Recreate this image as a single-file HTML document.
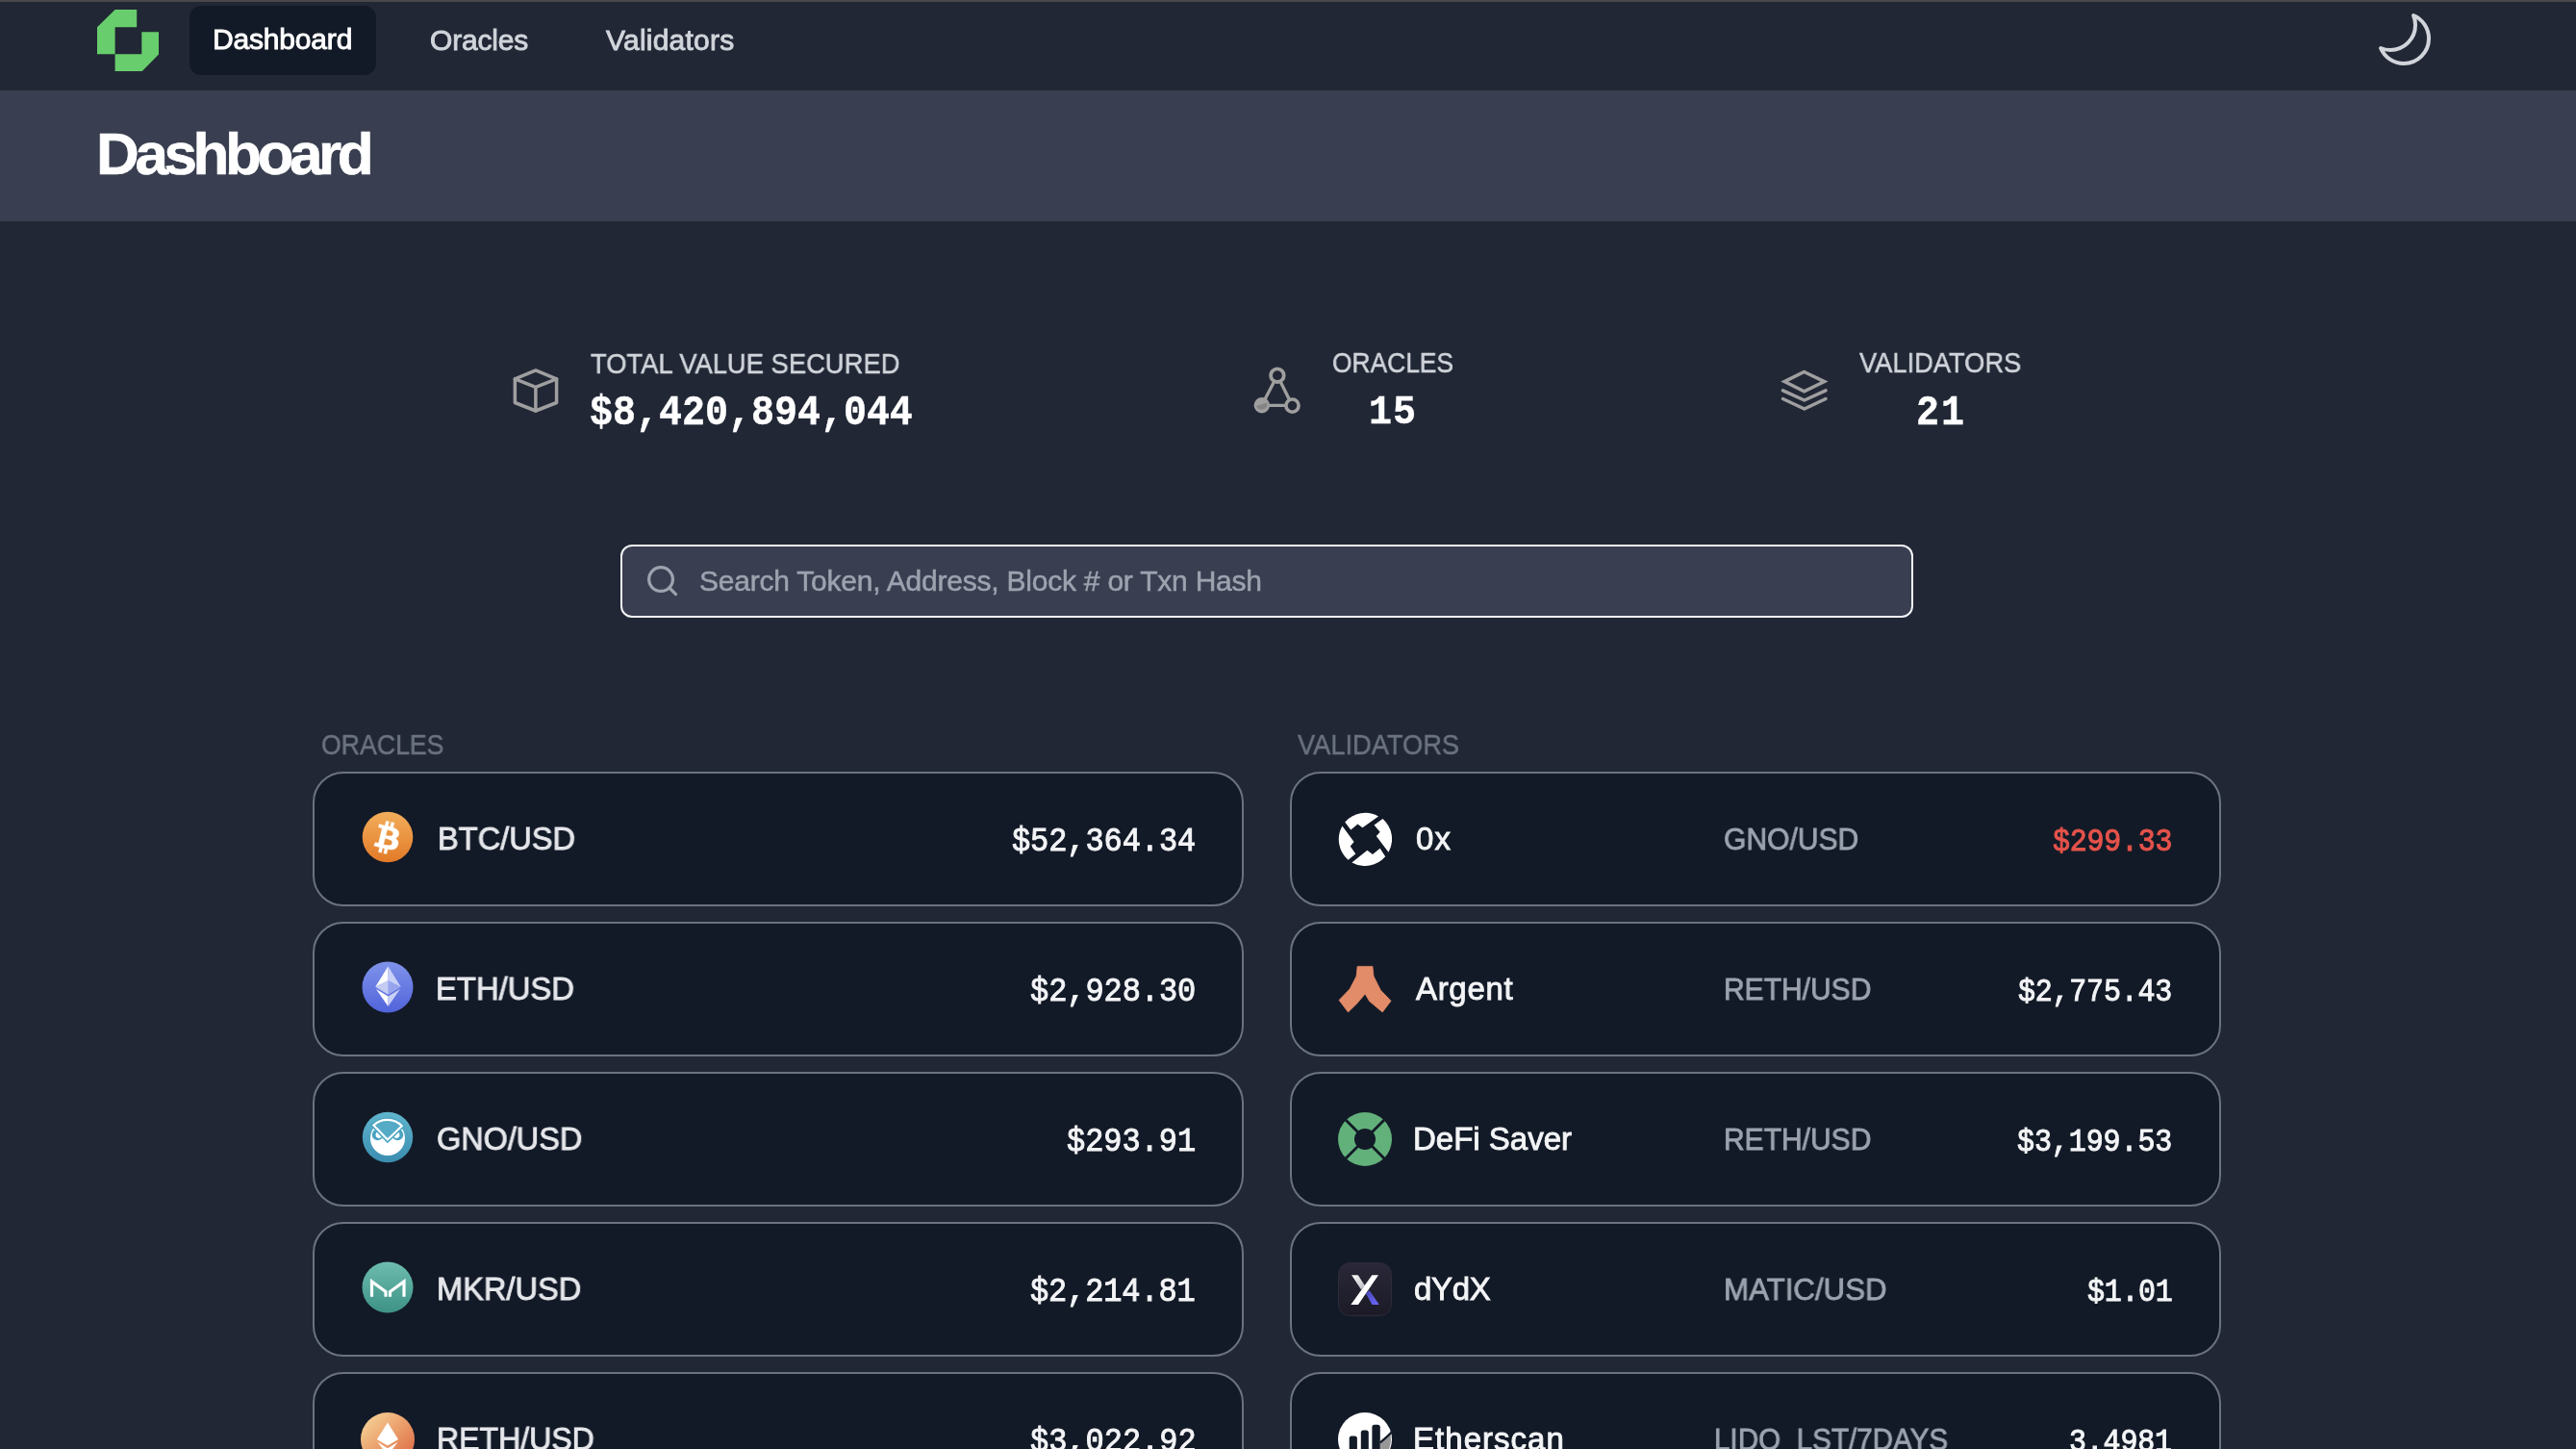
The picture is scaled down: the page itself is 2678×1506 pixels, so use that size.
<!DOCTYPE html>
<html><head><meta charset="utf-8"><title>Dashboard</title>
<style>
html,body{margin:0;padding:0;}
body{width:2678px;height:1506px;overflow:hidden;position:relative;background:#212735;}
.t{position:absolute;white-space:pre;will-change:transform;}
.card{position:absolute;width:964px;height:136px;border:2px solid #6b7280;border-radius:32px;background:#131a27;box-sizing:content-box;}
.abs{position:absolute;}
</style></head><body>
<div class="abs" style="left:0;top:0;width:2678px;height:2px;background:#484946;"></div>
<div class="abs" style="left:0;top:94px;width:2678px;height:136px;background:#393f50;"></div>
<div class="abs" style="left:197px;top:6px;width:194px;height:72px;border-radius:12px;background:#131a27;"></div>
<div class="abs" style="left:645px;top:566px;width:1340px;height:72px;border:2px solid #f3f4f6;border-radius:12px;background:#393f50;"></div>
<div class="card" style="left:325px;top:802px;"></div>
<div class="card" style="left:1341px;top:802px;"></div>
<div class="card" style="left:325px;top:958px;"></div>
<div class="card" style="left:1341px;top:958px;"></div>
<div class="card" style="left:325px;top:1114px;"></div>
<div class="card" style="left:1341px;top:1114px;"></div>
<div class="card" style="left:325px;top:1270px;"></div>
<div class="card" style="left:1341px;top:1270px;"></div>
<div class="card" style="left:325px;top:1426px;"></div>
<div class="card" style="left:1341px;top:1426px;"></div>
<svg class="abs" style="left:101px;top:10px;" width="64" height="64" viewBox="0 0 64 64"><polygon fill="#68cd6c" points="0,18.3 18.6,0 41.2,0 41.2,18.3 18.6,18.3 18.6,46.3 0,46.3"/><polygon fill="#68cd6c" points="46.3,23.2 64.2,23.2 64.2,46.3 46.3,64.5 18.6,64.5 18.6,46.3 46.3,46.3"/></svg>
<svg class="abs" style="left:2469px;top:10px;" width="64" height="64" viewBox="0 0 24 24"><g transform="translate(24,0) scale(-1,1)"><path fill="none" stroke="#d1d5db" stroke-width="1.5" stroke-linecap="round" stroke-linejoin="round" d="M21.752 15.002A9.718 9.718 0 0118 15.75c-5.385 0-9.75-4.365-9.75-9.75 0-1.33.266-2.597.748-3.752A9.753 9.753 0 003 11.25C3 16.635 7.365 21 12.75 21a9.753 9.753 0 009.002-5.998z"/></g></svg>
<svg class="abs" style="left:525px;top:375px;" width="65" height="60" viewBox="0 0 65 60"><g fill="none" stroke="#9f9f9f" stroke-width="3.5" stroke-linejoin="round" stroke-linecap="round"><path d="M31.9 9.9 L53.6 18.8 L53.6 43.5 L31.9 52 L10.35 43.5 L10.35 18.8 Z"/><path d="M10.35 18.8 L31.9 27.3 L53.6 18.8 M31.9 27.3 L31.9 52"/></g></svg>
<svg class="abs" style="left:1298px;top:376px;" width="60" height="60" viewBox="0 0 60 60"><g fill="none" stroke="#9f9f9f" stroke-width="3.3"><line x1="29.9" y1="14.2" x2="13.8" y2="45.2"/><line x1="29.9" y1="14.2" x2="45.5" y2="45.5"/><line x1="13.8" y1="45.3" x2="45.5" y2="45.3"/></g><circle cx="29.9" cy="14.2" r="6.8" fill="#212735" stroke="#9f9f9f" stroke-width="3.8"/><circle cx="45.5" cy="45.6" r="6.6" fill="#212735" stroke="#9f9f9f" stroke-width="3.6"/><circle cx="13.8" cy="45.2" r="8.2" fill="#9f9f9f"/><path d="M8 46 A6 6 0 0 0 19.5 44 L19 42.5 Z" fill="#858585"/></svg>
<svg class="abs" style="left:1845px;top:378px;" width="60" height="54" viewBox="0 0 60 54"><g fill="none" stroke="#9f9f9f" stroke-width="3.5" stroke-linecap="round"><path d="M30.6 8.5 L51.6 18.6 L30.6 28.9 L10.1 18.6 Z" stroke-linejoin="miter"/><path d="M8.5 27.8 L30.8 38 L53 27.8" stroke-linejoin="round"/><path d="M8.5 36.5 L30.8 47 L53 36.5" stroke-linejoin="round"/></g></svg>
<svg class="abs" style="left:669.8px;top:584.9px;" width="37.2" height="37.2" viewBox="0 0 24 24"><g fill="none" stroke="#9ca3af" stroke-width="2.1" stroke-linecap="round"><circle cx="11" cy="11" r="8"/><line x1="21" y1="21" x2="16.65" y2="16.65"/></g></svg>
<svg class="abs" style="left:0;top:0" width="0" height="0"><defs>
<linearGradient id="gBtc" x1="0" y1="0" x2="0" y2="1"><stop offset="0" stop-color="#f2ae5b"/><stop offset="1" stop-color="#e27a28"/></linearGradient>
<linearGradient id="gEth" x1="0" y1="0" x2="0" y2="1"><stop offset="0" stop-color="#7f93ea"/><stop offset="1" stop-color="#5163da"/></linearGradient>
<linearGradient id="gGno" x1="0" y1="0" x2="0" y2="1"><stop offset="0" stop-color="#60b5cd"/><stop offset="1" stop-color="#3a8db0"/></linearGradient>
<linearGradient id="gMkr" x1="0" y1="0" x2="0" y2="1"><stop offset="0" stop-color="#6dbdb0"/><stop offset="1" stop-color="#3d9285"/></linearGradient>
<linearGradient id="gReth" x1="0.15" y1="0.1" x2="0.9" y2="0.9"><stop offset="0" stop-color="#f4cd93"/><stop offset="0.45" stop-color="#eba06c"/><stop offset="1" stop-color="#dd6a44"/></linearGradient>
<linearGradient id="gDydx" x1="0" y1="0" x2="0" y2="1"><stop offset="0" stop-color="#2a2838"/><stop offset="1" stop-color="#1b1a26"/></linearGradient>
<linearGradient id="gDyW" x1="0" y1="0" x2="1" y2="1"><stop offset="0" stop-color="#ffffff"/><stop offset="1" stop-color="#b8b8c0"/></linearGradient>
<linearGradient id="gDyP" x1="0" y1="0" x2="1" y2="1"><stop offset="0" stop-color="#4a46b8"/><stop offset="1" stop-color="#6b68ff"/></linearGradient>
</defs></svg>
<svg class="abs" style="left:375px;top:842.2px;" width="56" height="56" viewBox="0 0 56 56"><circle cx="28" cy="28" r="26.3" fill="url(#gBtc)"/><g transform="translate(-0.3 0.9) scale(1.72)"><path fill="#ffffff" stroke="#ffffff" stroke-width="0.25" d="M23.189 14.02c.314-2.096-1.283-3.223-3.465-3.975l.708-2.84-1.728-.43-.69 2.765c-.454-.114-.92-.22-1.385-.326l.695-2.783L15.596 6l-.708 2.839c-.376-.086-.746-.17-1.104-.26l.002-.009-2.384-.595-.46 1.846s1.283.294 1.256.312c.7.175.826.638.805 1.006l-.806 3.235c.048.012.11.03.18.057l-.183-.045-1.13 4.532c-.086.212-.303.531-.793.41.018.025-1.256-.313-1.256-.313l-.858 1.978 2.25.561c.418.105.828.215 1.231.318l-.715 2.872 1.727.43.708-2.84c.472.127.93.245 1.378.357l-.706 2.828 1.728.43.715-2.866c2.948.558 5.164.333 6.097-2.333.752-2.146-.037-3.385-1.588-4.192 1.13-.26 1.98-1.003 2.207-2.538zm-3.95 5.538c-.533 2.147-4.148.986-5.320.695l.95-3.805c1.172.293 4.929.872 4.37 3.11zm.535-5.569c-.487 1.953-3.495.96-4.47.717l.86-3.45c.975.243 4.118.696 3.61 2.733z"/></g></svg>
<svg class="abs" style="left:375px;top:998.2px;" width="56" height="56" viewBox="0 0 56 56"><circle cx="28" cy="28" r="26.5" fill="url(#gEth)"/><polygon points="28.5,6.2 15.4,27.6 28.5,35.5" fill="#ffffff"/><polygon points="28.5,6.2 41.6,27.6 28.5,35.5" fill="#c9d0f6"/><polygon points="28.5,21 15.4,27.6 28.5,35.5 41.6,27.6" fill="#8d9cec" opacity="0.85"/><polygon points="15.4,27.6 28.5,21 28.5,35.5" fill="#c4ccf4"/><polygon points="16,30 28.5,48 28.5,37.6" fill="#ffffff"/><polygon points="41,30 28.5,48 28.5,37.6" fill="#c9d0f6"/></svg>
<svg class="abs" style="left:375px;top:1154.2px;" width="56" height="56" viewBox="0 0 56 56"><circle cx="28" cy="28" r="26.2" fill="url(#gGno)"/><circle cx="28" cy="29" r="18" fill="#ffffff"/><circle cx="17.6" cy="25.4" r="5.8" fill="#4aa3c1"/><circle cx="38.4" cy="25.4" r="5.8" fill="#4aa3c1"/><circle cx="18.9" cy="25.6" r="3.3" fill="#ffffff"/><circle cx="37.1" cy="25.6" r="3.3" fill="#ffffff"/><path d="M13.4 15.6 A21 21 0 0 1 42.8 16.2 L27.9 30.6 Z" fill="#4fa8c4" stroke="#4aa3c1" stroke-width="5" stroke-linejoin="miter"/><path d="M13.4 15.6 A21 21 0 0 1 42.8 16.2 L27.9 30.6 Z" fill="#55abc6" stroke="#ffffff" stroke-width="2.1" stroke-linejoin="miter"/></svg>
<svg class="abs" style="left:375px;top:1310.2px;" width="56" height="56" viewBox="0 0 56 56"><circle cx="28" cy="28" r="26.5" fill="url(#gMkr)"/><path d="M11.5 47.2 L11.5 31.5 L26 42 L26 47.2 M30.5 47.2 L30.5 42 L45 31.5 L45 47.2" transform="translate(0,-9.5)" fill="none" stroke="#ffffff" stroke-width="3.2" stroke-linejoin="miter"/></svg>
<svg class="abs" style="left:375px;top:1467.9px;" width="56" height="56" viewBox="0 0 56 56"><circle cx="28" cy="28" r="28" fill="url(#gReth)"/><polygon points="28,10.5 16.9,28 28,34.6 39,28" fill="#ffffff"/><polygon points="17.5,30.8 28,45 38.5,30.8 28,37.3" fill="#ffffff"/></svg>
<svg class="abs" style="left:1391px;top:844.1px;" width="56" height="56" viewBox="0 0 56 56"><path fill="#ffffff" d="M7.22 10.47 A28.0 28.0 0 0 1 42.01 4.40 L25.44 16.27 L20.47 12.40 L13.30 18.48 Z M46.43 6.88 A28.0 28.0 0 0 1 52.50 41.67 L39.80 25.10 L43.67 20.69 L37.59 13.51 Z M49.19 46.36 A28.0 28.0 0 0 1 14.40 52.44 L30.41 39.74 L35.94 43.88 L43.67 37.81 Z M10.54 49.68 A28.0 28.0 0 0 1 4.46 14.61 L16.61 30.90 L12.74 35.60 L18.27 43.60 Z "/></svg>
<svg class="abs" style="left:1391px;top:1000.1px;" width="56" height="56" viewBox="0 0 56 56"><polygon fill="#e38c69" stroke="#e38c69" stroke-width="0.8" stroke-linejoin="round" points="20.2,4.4 35.9,4.4 37.0,14.6 44.2,29.0 55.0,40.3 46.2,51.9 32.6,40.6 28.2,32.9 19.9,42.8 10.5,51.9 1.1,39.5 12.2,27.9 19.1,14.6"/></svg>
<svg class="abs" style="left:1391px;top:1156px;" width="56" height="56" viewBox="0 0 56 56"><circle cx="28" cy="28" r="28" fill="#62b07a"/><circle cx="28" cy="28" r="11" fill="#131a27"/><line x1="8" y1="8" x2="48" y2="48" stroke="#131a27" stroke-width="2.9"/><line x1="48" y1="8" x2="8" y2="48" stroke="#131a27" stroke-width="2.9"/></svg>
<svg class="abs" style="left:1391px;top:1311.8px;" width="56" height="56" viewBox="0 0 56 56"><rect x="0.5" y="0.5" width="55" height="55" rx="12" fill="url(#gDydx)" stroke="#2d2b3b" stroke-width="1"/><polygon fill="url(#gDyW)" points="14.1,13.3 20.8,13.3 28.0,24.2 24.0,28.2"/><polygon fill="url(#gDyP)" points="29.0,32.6 32.6,29.0 42.8,43.9 35.4,43.9"/><polygon fill="#ffffff" points="35.4,13.3 42.0,13.3 21.0,43.9 13.3,43.9"/></svg>
<svg class="abs" style="left:1391px;top:1467.6px;" width="56" height="56" viewBox="0 0 56 56"><circle cx="28" cy="28" r="28" fill="#ffffff"/><clipPath id="esClip"><circle cx="28" cy="28" r="27"/></clipPath><path clip-path="url(#esClip)" d="M43.8 31.4 Q50.0 26.4 56.0 20.4 L61.0 32.4 L45.0 52.4 Z" fill="#979797"/><path d="M43.8 31.4 Q50.0 26.4 56.0 20.4" fill="none" stroke="#131a27" stroke-width="2.2"/><rect x="11.7" y="24.4" width="8.2" height="30" rx="2.5" fill="#131a27"/><rect x="23.8" y="18.4" width="8.0" height="30" rx="2.5" fill="#131a27"/><rect x="35.4" y="12.8" width="8.4" height="36" rx="2.5" fill="#131a27"/></svg>
<div class="t" id="navDash" style="top:26.40px;font-family:'Liberation Sans';font-weight:400;font-size:30px;line-height:30px;color:#ffffff;letter-spacing:-0.180px;left:220.98px;-webkit-text-stroke:0.9px #ffffff;">Dashboard</div>
<div class="t" id="navOr" style="top:26.61px;font-family:'Liberation Sans';font-weight:400;font-size:30px;line-height:30px;color:#d1d5db;letter-spacing:-0.180px;left:446.82px;-webkit-text-stroke:0.9px #d1d5db;">Oracles</div>
<div class="t" id="navVal" style="top:26.81px;font-family:'Liberation Sans';font-weight:400;font-size:30px;line-height:30px;color:#d1d5db;letter-spacing:0.220px;left:630.34px;-webkit-text-stroke:0.9px #d1d5db;">Validators</div>
<div class="t" id="hdr" style="top:128.52px;font-family:'Liberation Sans';font-weight:700;font-size:62px;line-height:62px;color:#ffffff;letter-spacing:-4.388px;left:100.46px;-webkit-text-stroke:0.6px #ffffff;">Dashboard</div>
<div class="t" id="tvs" style="top:362.61px;font-family:'Liberation Sans';font-weight:400;font-size:30px;line-height:30px;color:#d1d5db;letter-spacing:0.000px;left:614.00px;transform:scale(0.9122,1.0000);transform-origin:0 25.39px;-webkit-text-stroke:0.5px #d1d5db;">TOTAL VALUE SECURED</div>
<div class="t" id="tvsv" style="top:410.66px;font-family:'Liberation Mono';font-weight:700;font-size:40px;line-height:40px;color:#ffffff;letter-spacing:-0.014px;left:613.10px;transform:scale(1.0000,1.1000);transform-origin:0 30.64px;-webkit-text-stroke:0.4px #ffffff;">$8,420,894,044</div>
<div class="t" id="orS" style="top:362.41px;font-family:'Liberation Sans';font-weight:400;font-size:30px;line-height:30px;color:#d1d5db;letter-spacing:0.000px;left:1385.10px;transform:scale(0.8795,1.0000);transform-origin:0 25.39px;-webkit-text-stroke:0.5px #d1d5db;">ORACLES</div>
<div class="t" id="n15" style="top:410.36px;font-family:'Liberation Mono';font-weight:700;font-size:40px;line-height:40px;color:#ffffff;letter-spacing:1.080px;left:1423.36px;transform:scale(1.0000,1.0700);transform-origin:0 30.64px;-webkit-text-stroke:0.4px #ffffff;">15</div>
<div class="t" id="valS" style="top:362.31px;font-family:'Liberation Sans';font-weight:400;font-size:30px;line-height:30px;color:#d1d5db;letter-spacing:0.000px;left:1932.50px;transform:scale(0.9094,1.0000);transform-origin:0 25.39px;-webkit-text-stroke:0.5px #d1d5db;">VALIDATORS</div>
<div class="t" id="n21" style="top:410.66px;font-family:'Liberation Mono';font-weight:700;font-size:40px;line-height:40px;color:#ffffff;letter-spacing:1.980px;left:1991.98px;transform:scale(1.0000,1.1100);transform-origin:0 30.64px;-webkit-text-stroke:0.4px #ffffff;">21</div>
<div class="t" id="search" style="top:589.31px;font-family:'Liberation Sans';font-weight:400;font-size:30px;line-height:30px;color:#9ca3af;letter-spacing:-0.224px;left:726.54px;-webkit-text-stroke:0.5px #9ca3af;">Search Token, Address, Block # or Txn Hash</div>
<div class="t" id="lblOr" style="top:759.00px;font-family:'Liberation Sans';font-weight:400;font-size:30px;line-height:30px;color:#6b7280;letter-spacing:0.000px;left:333.66px;transform:scale(0.8895,1.0000);transform-origin:0 25.39px;-webkit-text-stroke:0.5px #6b7280;">ORACLES</div>
<div class="t" id="lblVal" style="top:758.81px;font-family:'Liberation Sans';font-weight:400;font-size:30px;line-height:30px;color:#6b7280;letter-spacing:0.000px;left:1349.22px;transform:scale(0.9083,1.0000);transform-origin:0 25.39px;-webkit-text-stroke:0.5px #6b7280;">VALIDATORS</div>
<div class="t" id="ln0" style="top:855.17px;font-family:'Liberation Sans';font-weight:400;font-size:33px;line-height:33px;color:#e5e7eb;letter-spacing:0.000px;left:454.86px;transform:scale(0.9874,1.0000);transform-origin:0 27.93px;-webkit-text-stroke:0.9px #e5e7eb;">BTC/USD</div>
<div class="t" id="lp0" style="top:859.68px;font-family:'Liberation Mono';font-weight:400;font-size:32px;line-height:32px;color:#f3f4f6;letter-spacing:-0.080px;right:1434.44px;transform:scale(1.0000,1.0840);transform-origin:0 24.52px;-webkit-text-stroke:0.9px #f3f4f6;">$52,364.34</div>
<div class="t" id="rn0" style="top:855.17px;font-family:'Liberation Sans';font-weight:400;font-size:33px;line-height:33px;color:#f3f4f6;letter-spacing:1.080px;left:1471.90px;-webkit-text-stroke:0.9px #f3f4f6;">0x</div>
<div class="t" id="rpair0" style="top:856.01px;font-family:'Liberation Sans';font-weight:400;font-size:32px;line-height:32px;color:#9ca3af;letter-spacing:0.000px;left:1792.18px;transform:scale(0.9388,1.0000);transform-origin:0 27.09px;-webkit-text-stroke:0.8px #9ca3af;">GNO/USD</div>
<div class="t" id="rp0" style="top:861.22px;font-family:'Liberation Mono';font-weight:400;font-size:30px;line-height:30px;color:#e5534b;letter-spacing:-0.240px;right:420.04px;transform:scale(1.0000,1.1000);transform-origin:0 22.98px;-webkit-text-stroke:0.9px #e5534b;">$299.33</div>
<div class="t" id="ln1" style="top:1011.17px;font-family:'Liberation Sans';font-weight:400;font-size:33px;line-height:33px;color:#e5e7eb;letter-spacing:0.000px;left:453.42px;transform:scale(0.9940,1.0000);transform-origin:0 27.93px;-webkit-text-stroke:0.9px #e5e7eb;">ETH/USD</div>
<div class="t" id="lp1" style="top:1015.68px;font-family:'Liberation Mono';font-weight:400;font-size:32px;line-height:32px;color:#f3f4f6;letter-spacing:-0.073px;right:1434.62px;transform:scale(1.0000,1.0840);transform-origin:0 24.52px;-webkit-text-stroke:0.9px #f3f4f6;">$2,928.30</div>
<div class="t" id="rn1" style="top:1011.17px;font-family:'Liberation Sans';font-weight:400;font-size:33px;line-height:33px;color:#f3f4f6;letter-spacing:0.684px;left:1472.08px;-webkit-text-stroke:0.9px #f3f4f6;">Argent</div>
<div class="t" id="rpair1" style="top:1012.01px;font-family:'Liberation Sans';font-weight:400;font-size:32px;line-height:32px;color:#9ca3af;letter-spacing:0.000px;left:1791.64px;transform:scale(0.9379,1.0000);transform-origin:0 27.09px;-webkit-text-stroke:0.8px #9ca3af;">RETH/USD</div>
<div class="t" id="rp1" style="top:1017.22px;font-family:'Liberation Mono';font-weight:400;font-size:30px;line-height:30px;color:#f3f4f6;letter-spacing:-0.225px;right:420.22px;transform:scale(1.0000,1.1000);transform-origin:0 22.98px;-webkit-text-stroke:0.9px #f3f4f6;">$2,775.43</div>
<div class="t" id="ln2" style="top:1167.17px;font-family:'Liberation Sans';font-weight:400;font-size:33px;line-height:33px;color:#e5e7eb;letter-spacing:0.000px;left:454.32px;transform:scale(0.9818,1.0000);transform-origin:0 27.93px;-webkit-text-stroke:0.9px #e5e7eb;">GNO/USD</div>
<div class="t" id="lp2" style="top:1171.68px;font-family:'Liberation Mono';font-weight:400;font-size:32px;line-height:32px;color:#f3f4f6;letter-spacing:-0.050px;right:1434.62px;transform:scale(1.0000,1.0840);transform-origin:0 24.52px;-webkit-text-stroke:0.9px #f3f4f6;">$293.91</div>
<div class="t" id="rn2" style="top:1167.17px;font-family:'Liberation Sans';font-weight:400;font-size:33px;line-height:33px;color:#f3f4f6;letter-spacing:-0.000px;left:1469.38px;-webkit-text-stroke:0.9px #f3f4f6;">DeFi Saver</div>
<div class="t" id="rpair2" style="top:1168.01px;font-family:'Liberation Sans';font-weight:400;font-size:32px;line-height:32px;color:#9ca3af;letter-spacing:0.000px;left:1791.64px;transform:scale(0.9379,1.0000);transform-origin:0 27.09px;-webkit-text-stroke:0.8px #9ca3af;">RETH/USD</div>
<div class="t" id="rp2" style="top:1173.22px;font-family:'Liberation Mono';font-weight:400;font-size:30px;line-height:30px;color:#f3f4f6;letter-spacing:-0.090px;right:419.68px;transform:scale(1.0000,1.1000);transform-origin:0 22.98px;-webkit-text-stroke:0.9px #f3f4f6;">$3,199.53</div>
<div class="t" id="ln3" style="top:1323.17px;font-family:'Liberation Sans';font-weight:400;font-size:33px;line-height:33px;color:#e5e7eb;letter-spacing:0.000px;left:454.14px;transform:scale(0.9880,1.0000);transform-origin:0 27.93px;-webkit-text-stroke:0.9px #e5e7eb;">MKR/USD</div>
<div class="t" id="lp3" style="top:1327.68px;font-family:'Liberation Mono';font-weight:400;font-size:32px;line-height:32px;color:#f3f4f6;letter-spacing:-0.140px;right:1435.34px;transform:scale(1.0000,1.0840);transform-origin:0 24.52px;-webkit-text-stroke:0.9px #f3f4f6;">$2,214.81</div>
<div class="t" id="rn3" style="top:1323.17px;font-family:'Liberation Sans';font-weight:400;font-size:33px;line-height:33px;color:#f3f4f6;letter-spacing:-0.300px;left:1470.28px;-webkit-text-stroke:0.9px #f3f4f6;">dYdX</div>
<div class="t" id="rpair3" style="top:1324.01px;font-family:'Liberation Sans';font-weight:400;font-size:32px;line-height:32px;color:#9ca3af;letter-spacing:0.000px;left:1791.64px;transform:scale(0.9766,1.0000);transform-origin:0 27.09px;-webkit-text-stroke:0.8px #9ca3af;">MATIC/USD</div>
<div class="t" id="rp3" style="top:1329.22px;font-family:'Liberation Mono';font-weight:400;font-size:30px;line-height:30px;color:#f3f4f6;letter-spacing:-0.315px;right:419.68px;transform:scale(1.0000,1.1000);transform-origin:0 22.98px;-webkit-text-stroke:0.9px #f3f4f6;">$1.01</div>
<div class="t" id="ln4" style="top:1479.17px;font-family:'Liberation Sans';font-weight:400;font-size:33px;line-height:33px;color:#e5e7eb;letter-spacing:0.000px;left:454.14px;transform:scale(0.9715,1.0000);transform-origin:0 27.93px;-webkit-text-stroke:0.9px #e5e7eb;">RETH/USD</div>
<div class="t" id="lp4" style="top:1483.68px;font-family:'Liberation Mono';font-weight:400;font-size:32px;line-height:32px;color:#f3f4f6;letter-spacing:-0.027px;right:1434.44px;transform:scale(1.0000,1.0840);transform-origin:0 24.52px;-webkit-text-stroke:0.9px #f3f4f6;">$3,022.92</div>
<div class="t" id="rn4" style="top:1479.17px;font-family:'Liberation Sans';font-weight:400;font-size:33px;line-height:33px;color:#f3f4f6;letter-spacing:1.035px;left:1469.38px;-webkit-text-stroke:0.9px #f3f4f6;">Etherscan</div>
<div class="t" id="rpair4" style="top:1480.01px;font-family:'Liberation Sans';font-weight:400;font-size:32px;line-height:32px;color:#9ca3af;letter-spacing:0.000px;left:1781.62px;transform:scale(0.9258,1.0000);transform-origin:0 27.09px;-webkit-text-stroke:0.8px #9ca3af;">LIDO_LST/7DAYS</div>
<div class="t" id="rp4" style="top:1485.22px;font-family:'Liberation Mono';font-weight:400;font-size:30px;line-height:30px;color:#f3f4f6;letter-spacing:-0.198px;right:419.68px;transform:scale(1.0000,1.1000);transform-origin:0 22.98px;-webkit-text-stroke:0.9px #f3f4f6;">3.4981</div>
</body></html>
